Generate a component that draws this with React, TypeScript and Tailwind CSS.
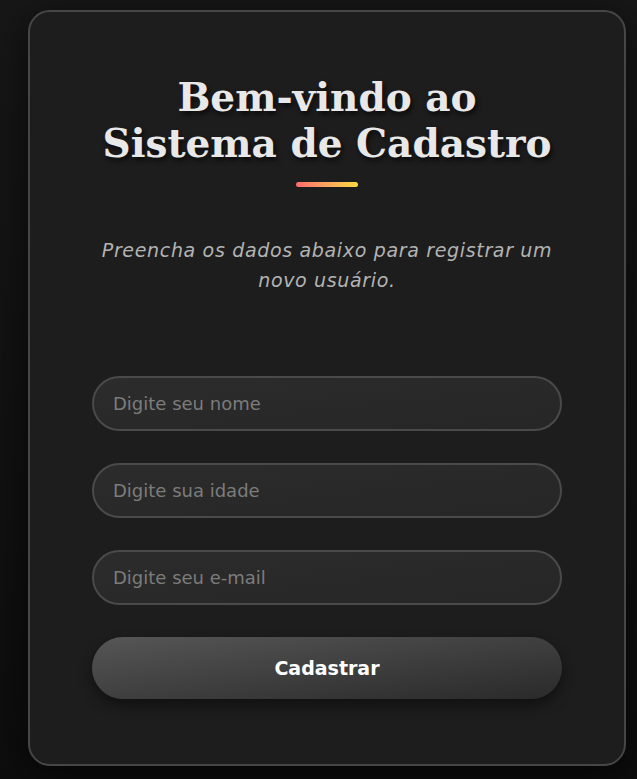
import React from 'react';

const App: React.FC = () => {
  return (
    <div className="min-h-[779px] w-full bg-gradient-to-b from-[#171717] to-[#0d0d0d] pl-[28px] pr-[11px] pt-[10px] pb-[14px]">
      <div className="w-[598px] rounded-[22px] border-2 border-[#464646] bg-[#1d1d1d] px-[62px] pt-[62px] pb-[65px] shadow-[0_10px_40px_rgba(0,0,0,0.6)]">
        <h1
          className="text-center text-[39px] font-bold leading-[46px] text-[#e8e8e8] [text-shadow:2px_3px_5px_rgba(0,0,0,0.7)]"
          style={{ fontFamily: 'Georgia, "DejaVu Serif", "Liberation Serif", serif' }}
        >
          Bem-vindo ao
          <br />
          Sistema de Cadastro
        </h1>
        <div className="mx-auto mt-[16px] h-[5px] w-[62px] rounded-full bg-gradient-to-r from-[#ff6b6b] to-[#ffd93d]"></div>

        <p className="mt-[48px] text-center text-[19px] italic leading-[30px] tracking-[0.035em] text-[#b3b3b3] [font-family:'DejaVu_Sans',sans-serif]">
          Preencha os dados abaixo para registrar um novo usuário.
        </p>

        <form className="mt-[81px] flex flex-col gap-[32px] [font-family:'DejaVu_Sans',sans-serif]">
          <input
            type="text"
            placeholder="Digite seu nome"
            className="h-[55px] w-full rounded-full border-2 border-[#4a4a4a] bg-gradient-to-br from-[#2c2c2c] to-[#262626] px-[19px] text-[18px] text-[#e0e0e0] outline-none placeholder:text-[#7c7c7c]"
          />
          <input
            type="text"
            placeholder="Digite sua idade"
            className="h-[55px] w-full rounded-full border-2 border-[#4a4a4a] bg-gradient-to-br from-[#2c2c2c] to-[#262626] px-[19px] text-[18px] text-[#e0e0e0] outline-none placeholder:text-[#7c7c7c]"
          />
          <input
            type="email"
            placeholder="Digite seu e-mail"
            className="h-[55px] w-full rounded-full border-2 border-[#4a4a4a] bg-gradient-to-br from-[#2c2c2c] to-[#262626] px-[19px] text-[18px] text-[#e0e0e0] outline-none placeholder:text-[#7c7c7c]"
          />
          <button
            type="button"
            className="h-[62px] w-full rounded-full bg-gradient-to-br from-[#565656] to-[#2a2a2a] text-[19px] font-bold text-white shadow-[0_6px_14px_rgba(0,0,0,0.45)]"
          >
            Cadastrar
          </button>
        </form>
      </div>
    </div>
  );
};

export default App;
